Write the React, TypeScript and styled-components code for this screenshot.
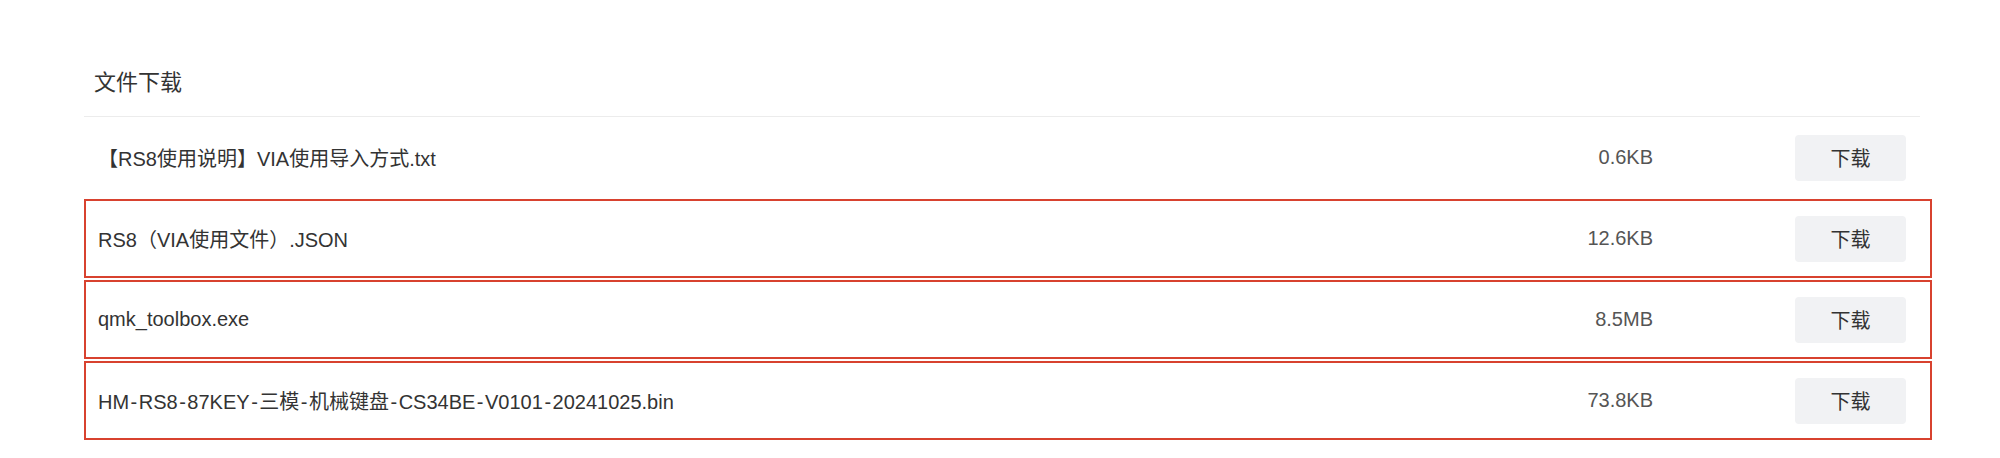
import React from "react";
import styled, { createGlobalStyle } from "styled-components";

const GlobalStyle = createGlobalStyle`
  html, body {
    margin: 0;
    padding: 0;
    background: #ffffff;
  }
  body {
    font-family: "Liberation Sans", "Noto Sans CJK SC", sans-serif;
    color: #333333;
  }
`;

interface FileItem {
  name: string;
  size: string;
  marked?: boolean;
}

const files: FileItem[] = [
  { name: "【RS8使用说明】VIA使用导入方式.txt", size: "0.6KB" },
  { name: "RS8（VIA使用文件）.JSON", size: "12.6KB", marked: true },
  { name: "qmk_toolbox.exe", size: "8.5MB", marked: true },
  {
    name: "HM-RS8-87KEY-三模-机械键盘-CS34BE-V0101-20241025.bin",
    size: "73.8KB",
    marked: true,
  },
];

const Page = styled.div`
  padding: 65px 80px 0 84px;
  width: 1836px;
`;

const Title = styled.h2`
  margin: 0;
  padding: 0 0 21px 10px;
  font-family: "Noto Sans CJK SC", sans-serif;
  font-size: 22px;
  line-height: 30px;
  font-weight: 400;
  color: #333333;
  border-bottom: 1px solid #ececec;
`;

const List = styled.div`
  display: flex;
  flex-direction: column;
`;

const Row = styled.div<{ $marked?: boolean }>`
  position: relative;
  display: grid;
  grid-template-columns: 1fr 200px 111px;
  column-gap: 142px;
  align-items: center;
  height: 81px;
  padding: 0 14px;

  &::after {
    content: "";
    display: ${(p) => (p.$marked ? "block" : "none")};
    position: absolute;
    top: 1px;
    bottom: 1px;
    left: 0;
    right: -12px;
    border: 2px solid #d8422f;
    pointer-events: none;
  }
`;

const FileName = styled.span`
  font-size: 20px;
  color: #333333;
  white-space: nowrap;
`;

// the hyphens in the file names are drawn wider in the original font
const Dash = styled.span`
  margin: 0 1.5px;
`;

const FileSize = styled.span`
  font-size: 20px;
  color: #555555;
  text-align: right;
`;

const DownloadButton = styled.button`
  height: 46px;
  width: 111px;
  border: none;
  border-radius: 4px;
  background: #f1f2f4;
  color: #333333;
  font-family: "Noto Sans CJK SC", sans-serif;
  font-size: 20px;
  cursor: pointer;
  padding: 0;
`;

const renderName = (name: string) =>
  name.split("-").map((part, i) => (
    <React.Fragment key={i}>
      {i > 0 && <Dash>-</Dash>}
      {part}
    </React.Fragment>
  ));

const App: React.FC = () => {
  return (
    <>
      <GlobalStyle />
      <Page>
        <Title>文件下载</Title>
        <List>
          {files.map((file) => (
            <Row key={file.name} $marked={file.marked}>
              <FileName>{renderName(file.name)}</FileName>
              <FileSize>{file.size}</FileSize>
              <DownloadButton>下载</DownloadButton>
            </Row>
          ))}
        </List>
      </Page>
    </>
  );
};

export default App;
